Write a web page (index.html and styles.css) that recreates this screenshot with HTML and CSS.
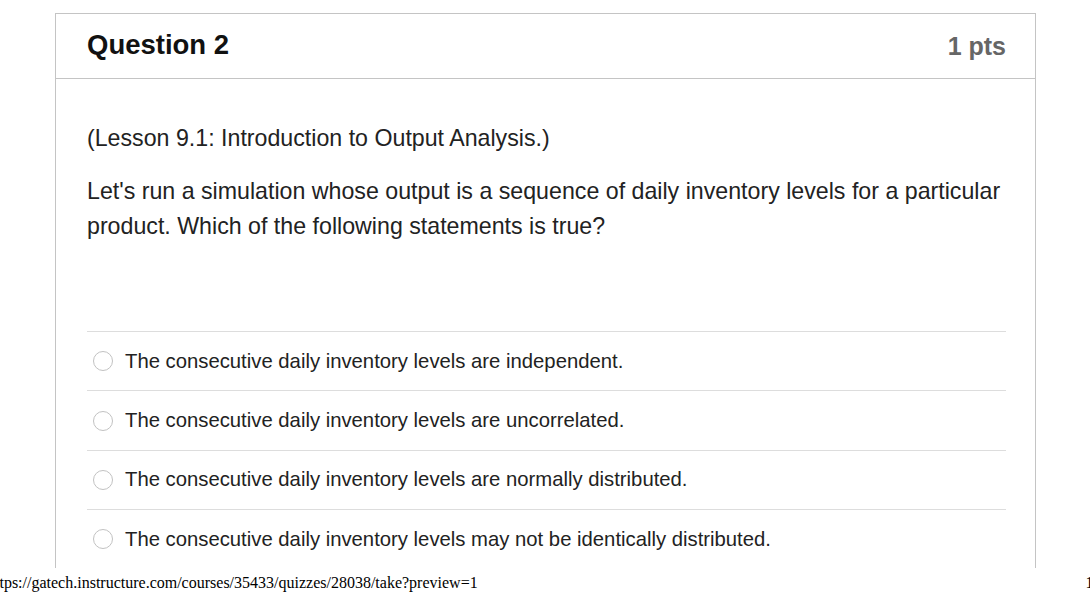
FILE: index.html
```html
<!DOCTYPE html>
<html>
<head>
<meta charset="utf-8">
<link rel="stylesheet" href="styles.css">
</head>
<body>
<div class="page">
  <div class="card">
    <div class="card-header">
      <h2 class="q-title">Question 2</h2>
      <span class="q-pts">1 pts</span>
    </div>
    <div class="card-body">
      <p class="q-text">(Lesson 9.1: Introduction to Output Analysis.)</p>
      <p class="q-text">Let's run a simulation whose output is a sequence of daily inventory levels for a particular product. Which of the following statements is true?</p>
      <div class="answers">
        <div class="answer"><span class="radio"></span><span class="a-text">The consecutive daily inventory levels are independent.</span></div>
        <div class="answer"><span class="radio"></span><span class="a-text">The consecutive daily inventory levels are uncorrelated.</span></div>
        <div class="answer"><span class="radio"></span><span class="a-text">The consecutive daily inventory levels are normally distributed.</span></div>
        <div class="answer"><span class="radio"></span><span class="a-text">The consecutive daily inventory levels may not be identically distributed.</span></div>
      </div>
    </div>
  </div>
</div>
<div class="print-footer">
  <span class="url">https://gatech.instructure.com/courses/35433/quizzes/28038/take?preview=1</span>
  <span class="pagenum">1/2</span>
</div>
</body>
</html>
```
FILE: styles.css
```css
html, body {
  margin: 0;
  padding: 0;
  background: #fff;
}
body {
  width: 1090px;
  height: 597px;
  overflow: hidden;
  font-family: "Liberation Sans", Arial, sans-serif;
  color: #222;
}
.page {
  height: 568px;
  overflow: hidden;
  padding-top: 13px;
  box-sizing: border-box;
}
.card {
  margin-left: 55px;
  width: 981px;
  box-sizing: border-box;
  border: 1px solid #c4c4c4;
  border-bottom: none;
  height: 600px;
}
.card-header {
  height: 65px;
  box-sizing: border-box;
  border-bottom: 1px solid #c4c4c4;
  display: flex;
  align-items: center;
  justify-content: space-between;
  padding: 0 29px 0 31px;
}
.q-title {
  margin: 0;
  font-size: 27.5px;
  font-weight: bold;
  color: #111;
  padding-bottom: 2px;
}
.q-pts {
  font-size: 25px;
  font-weight: bold;
  color: #666;
}
.card-body {
  padding: 42px 29px 0 31px;
}
.q-text {
  margin: 0 0 18px;
  font-size: 23.2px;
  line-height: 35px;
  color: #222;
}
.answers {
  margin-top: 87px;
}
.answer {
  border-top: 1px solid #ddd;
  height: 59.4px;
  box-sizing: border-box;
  display: flex;
  align-items: center;
  padding-left: 6px;
}
.radio {
  width: 20px;
  height: 20px;
  border-radius: 50%;
  border: 1px solid #c2c2c2;
  box-sizing: border-box;
  background: #fff;
  margin-right: 12px;
  flex: none;
}
.a-text {
  font-size: 20.3px;
  color: #222;
}
.print-footer {
  height: 29px;
  display: flex;
  justify-content: space-between;
  align-items: center;
  font-family: "Liberation Serif", "Times New Roman", serif;
  font-size: 16px;
  color: #000;
  white-space: nowrap;
}
.url {
  margin-left: -13px;
}
.pagenum {
  margin-right: -16px;
}
```
